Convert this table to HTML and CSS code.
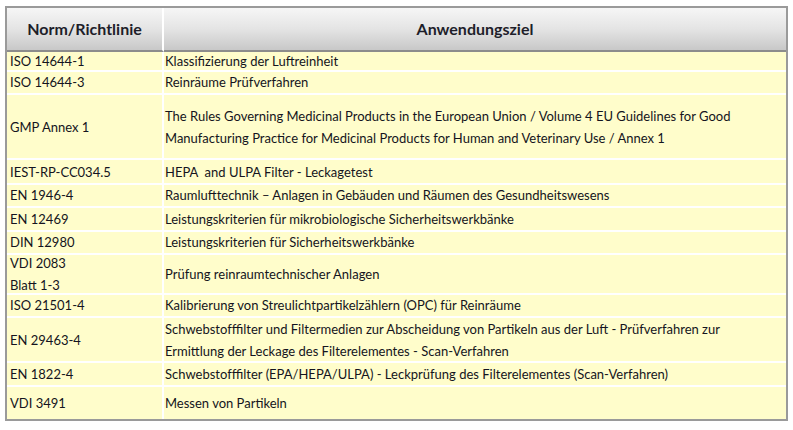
FILE: index.html
```html
<!DOCTYPE html>
<html lang="de">
<head>
<meta charset="utf-8">
<title>Normen</title>
<link rel="stylesheet" href="styles.css">
</head>
<body>
<table class="norms">
  <thead>
    <tr><th class="c1">Norm/Richtlinie</th><th class="c2">Anwendungsziel</th></tr>
  </thead>
  <tbody>
    <tr class="r18"><td>ISO 14644-1</td><td>Klassifizierung der Luftreinheit</td></tr>
    <tr class="r21"><td>ISO 14644-3</td><td>Reinräume Prüfverfahren</td></tr>
    <tr class="r63"><td>GMP Annex 1</td><td>The Rules Governing Medicinal Products in the European Union / Volume 4 EU Guidelines for Good<br>Manufacturing Practice for Medicinal Products for Human and Veterinary Use / Annex 1</td></tr>
    <tr class="r23"><td>IEST-RP-CC034.5</td><td>HEPA &nbsp;and ULPA Filter - Leckagetest</td></tr>
    <tr class="r21"><td>EN 1946-4</td><td>Raumlufttechnik – Anlagen in Gebäuden und Räumen des Gesundheitswesens</td></tr>
    <tr class="r22"><td>EN 12469</td><td>Leistungskriterien für mikrobiologische Sicherheitswerkbänke</td></tr>
    <tr class="r21"><td>DIN 12980</td><td>Leistungskriterien für Sicherheitswerkbänke</td></tr>
    <tr class="r39"><td><div class="fit">VDI 2083<br>Blatt 1-3</div></td><td><div class="fit">Prüfung reinraumtechnischer Anlagen</div></td></tr>
    <tr class="r21"><td>ISO 21501-4</td><td>Kalibrierung von Streulichtpartikelzählern (OPC) für Reinräume</td></tr>
    <tr class="r43"><td><div class="fit">EN 29463-4</div></td><td><div class="fit">Schwebstofffilter und Filtermedien zur Abscheidung von Partikeln aus der Luft - Prüfverfahren zur<br>Ermittlung der Leckage des Filterelementes - Scan-Verfahren</div></td></tr>
    <tr class="r22"><td>EN 1822-4</td><td>Schwebstofffilter (EPA/HEPA/ULPA) - Leckprüfung des Filterelementes (Scan-Verfahren)</td></tr>
    <tr class="r34 last"><td>VDI 3491</td><td>Messen von Partikeln</td></tr>
  </tbody>
</table>
</body>
</html>
```
FILE: styles.css
```css
html, body {
  margin: 0;
  padding: 0;
  background: #ffffff;
}
body {
  padding: 6px 5px 0 5px;
  font-family: Lato, "Open Sans", sans-serif;
  font-size: 13px;
  color: #141420;
}
.norms {
  width: 783px;
  border-collapse: separate;
  border-spacing: 0;
  border: 2px solid #9a9a9a;
}
.norms th {
  height: 42px;
  padding: 0;
  font-size: 16px;
  line-height: 20px;
  font-weight: bold;
  color: #1e1e2a;
  text-align: center;
  vertical-align: middle;
  background: linear-gradient(to bottom, #f6f6f6 0%, #e4e4e4 50%, #c8c8c8 100%);
  border-bottom: 2px solid #8c8c8c;
}
.norms th.c1 {
  width: 155px;
  border-right: 2px solid #ffffff;
}
.norms td {
  padding: 0 2px 0 3px;
  background: #fffdcb;
  vertical-align: middle;
  line-height: 22px;
  border-bottom: 2px solid #ffffff;
  white-space: nowrap;
}
.norms td:first-child {
  border-right: 2px solid #ffffff;
}
.norms td + td {
  padding-left: 1px;
}
.norms tr.last td {
  border-bottom: 0;
}
.fit {
  display: flex;
  flex-direction: column;
  justify-content: center;
}
.r18 td { height: 18px; line-height: 18px; }
.r21 td { height: 21px; line-height: 21px; }
.r22 td { height: 22px; }
.r23 td { height: 23px; }
.r34 td { height: 32px; }
.r39 td { height: 38px; }
.r39 .fit { height: 38px; }
.r43 td { height: 43px; }
.r43 .fit { height: 43px; }
.r63 td { height: 63px; }
```
